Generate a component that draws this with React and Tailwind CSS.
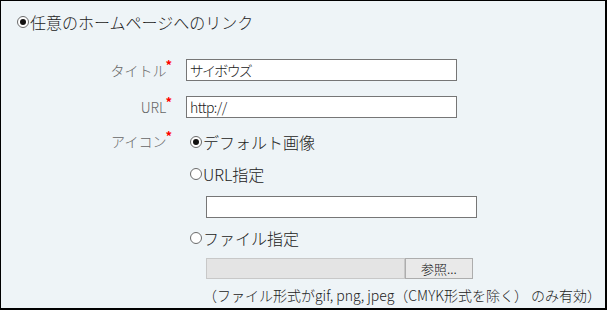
import React from "react";

const font = { fontFamily: '"Noto Sans CJK JP", "Noto Sans", sans-serif' };

function Radio({ checked }) {
  return (
    <span className="inline-flex h-[12px] w-[12px] shrink-0 items-center justify-center rounded-full border-[1.5px] border-[#6b6b6b] bg-white">
      {checked && <span className="h-[6px] w-[6px] rounded-full bg-[#111]" />}
    </span>
  );
}

function Label({ children }) {
  return (
    <div className="flex w-[171px] shrink-0 justify-end text-[14px] leading-[20px] text-[#666]">
      <span>{children}</span>
      <span className="-ml-[1px] -mt-[2px] text-[13px] leading-[14px] font-bold text-[#f00]">*</span>
    </div>
  );
}

function TextBox({ value }) {
  return (
    <div className="flex h-[22px] w-[271px] items-center border border-[#767676] bg-white px-[3px] text-[14px] leading-[20px] tracking-[-0.6px] text-[#222] [font-feature-settings:'palt']">
      {value}
    </div>
  );
}

function Option({ checked, children }) {
  return (
    <div className="flex h-[24px] items-center gap-[1px] pl-[4px] text-[16px] leading-[24px] text-[#222]">
      <Radio checked={checked} />
      <span>{children}</span>
    </div>
  );
}

export default function App() {
  return (
    <div
      className="box-border h-[310px] w-[607px] border-t border-l border-r-2 border-b-2 border-black bg-[#eef4f7] font-light"
      style={font}
    >
      {/* heading */}
      <div className="mt-[9px] flex h-[24px] items-center gap-[1px] pl-[16px] text-[16px] leading-[24px] text-[#222]">
        <Radio checked />
        <span>任意のホームページへのリンク</span>
      </div>

      {/* title */}
      <div className="mt-[25px] flex items-center">
        <Label>タイトル</Label>
        <div className="pl-[14px]">
          <TextBox value="サイボウズ" />
        </div>
      </div>

      {/* url */}
      <div className="mt-[15px] flex items-center">
        <Label>URL</Label>
        <div className="pl-[14px]">
          <TextBox value="http://" />
        </div>
      </div>

      {/* icon */}
      <div className="mt-[12px] flex items-start">
        <div className="pt-[1px]">
          <Label>アイコン</Label>
        </div>
        <div className="flex flex-col pl-[14px]">
          <Option checked>デフォルト画像</Option>
          <div className="mt-[8px]">
            <Option>URL指定</Option>
          </div>
          <div className="mt-[10px] pl-[20px]">
            <TextBox value="" />
          </div>
          <div className="mt-[8px]">
            <Option>ファイル指定</Option>
          </div>
          <div className="mt-[8px] flex h-[21px] pl-[20px]">
            <div className="h-[21px] w-[199px] border border-[#c8c8c8] bg-[#e4e4e4]" />
            <div className="flex h-[21px] w-[68px] items-center justify-center border border-[#adadad] bg-[#e9e9e9] text-[13px] leading-[18px] text-[#111] [font-feature-settings:'palt']">
              参照...
            </div>
          </div>
          <div className="mt-[7px] pl-[17px] text-[14px] leading-[18px] whitespace-nowrap text-[#222]">
            （ファイル形式がgif, png, jpeg（CMYK形式を除く） のみ有効）
          </div>
        </div>
      </div>
    </div>
  );
}
